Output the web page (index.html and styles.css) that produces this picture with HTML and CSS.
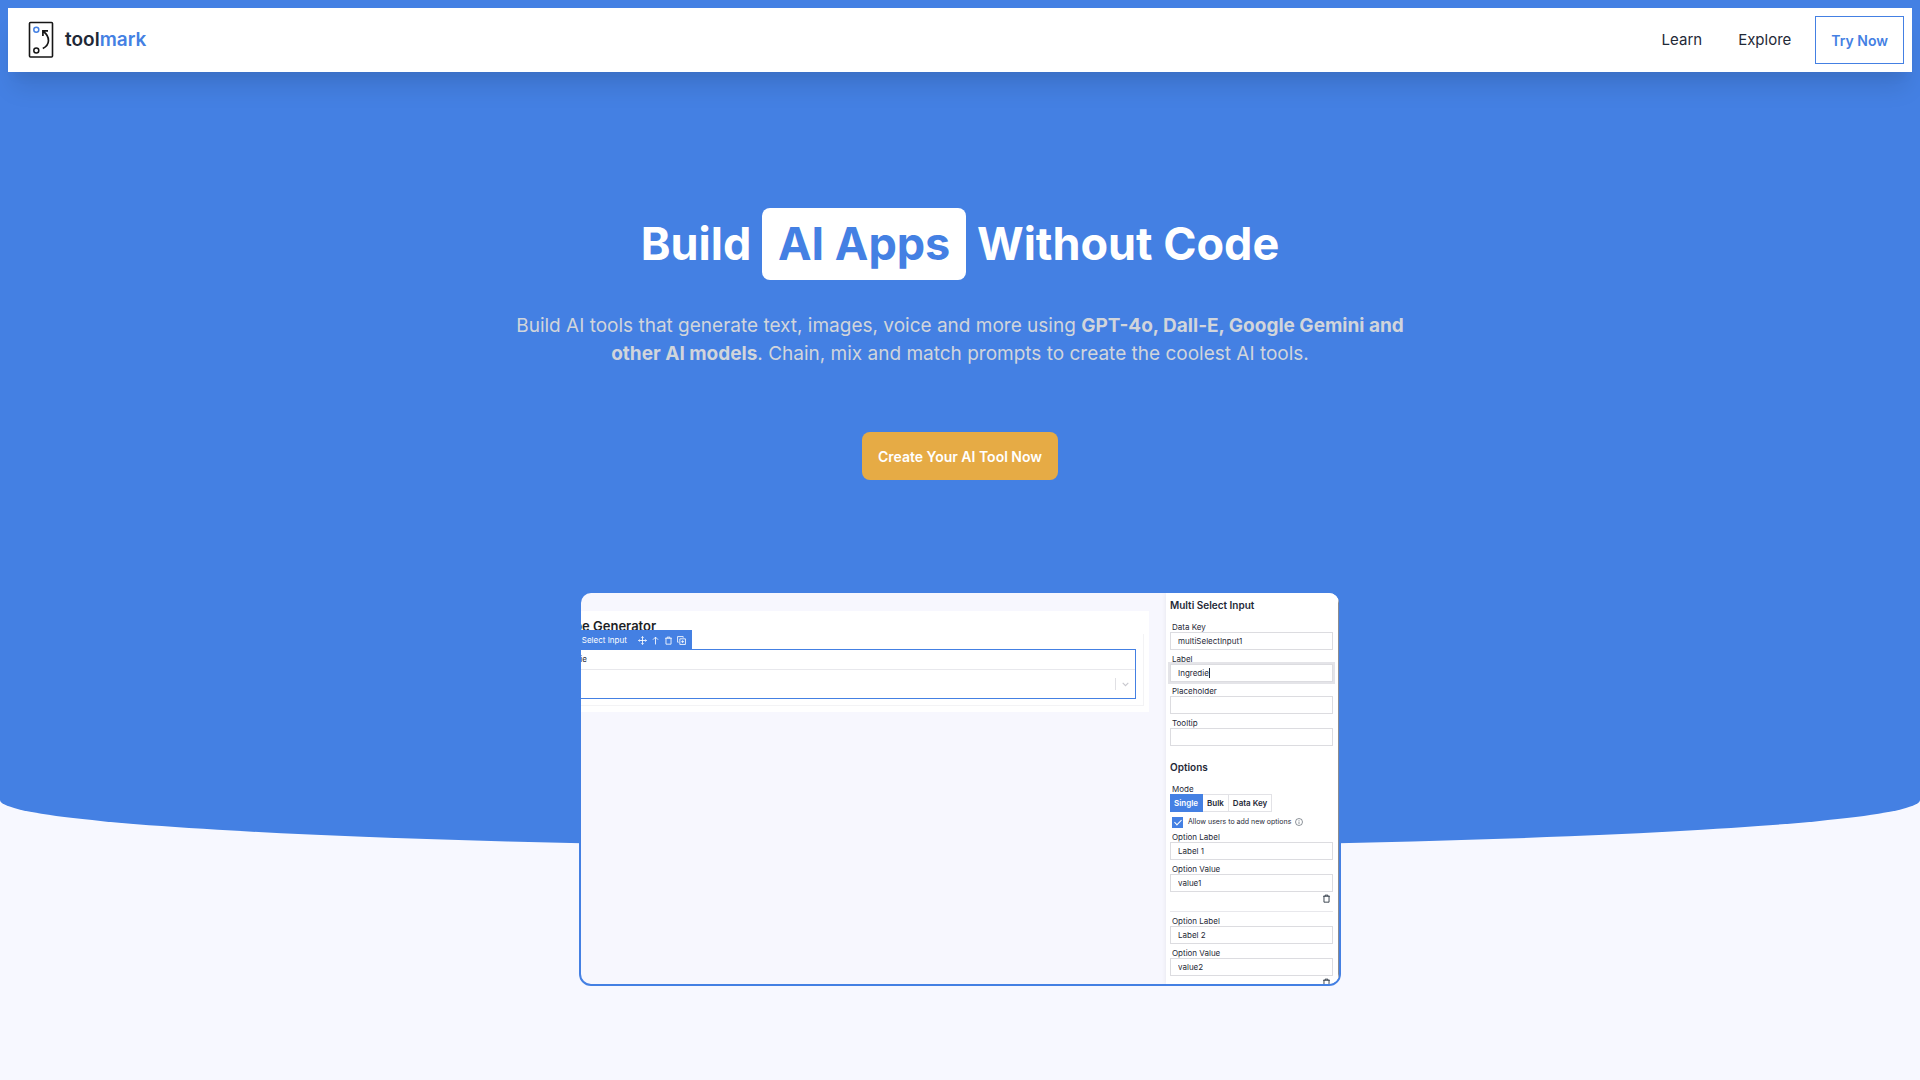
FILE: index.html
```html
<!DOCTYPE html>
<html lang="en">
<head>
<meta charset="utf-8">
<meta name="viewport" content="width=device-width, initial-scale=1">
<title>Toolmark</title>
<link rel="stylesheet" href="styles.css">
</head>
<body>
<svg class="sprite" aria-hidden="true">
  <symbol id="trash" viewBox="0 0 16 16"><path d="M2 4h12M5.500 4V2h5v2M3.500 4v10.500h9V4" /></symbol>
</svg>
<div class="hero">
  <header class="navbar">
    <a class="brand" href="#">
      <svg class="brand-mark" viewBox="0 0 26 38" aria-hidden="true">
        <rect x="1.500" y="1.500" width="23" height="34.500" rx="1" fill="none" stroke="#161616" stroke-width="1.600"/>
        <circle cx="8.300" cy="8.700" r="2.500" fill="none" stroke="#4480e3" stroke-width="1.500"/>
        <circle cx="8.300" cy="29.500" r="2.500" fill="none" stroke="#161616" stroke-width="1.500"/>
        <path d="M14.800 27.500C22 24 22.500 16 15.500 10.500M14.900 15V9.800H20" fill="none" stroke="#161616" stroke-width="1.700"/>
      </svg>
      <span class="brand-name">tool<span class="accent">mark</span></span>
    </a>
    <nav class="links">
      <a class="link" href="#">Learn</a>
      <a class="link" href="#">Explore</a>
      <button class="try" type="button">Try Now</button>
    </nav>
  </header>

  <main class="content">
    <h1 class="title">Build <span class="pill">AI Apps</span> Without Code</h1>
    <p class="lead">Build AI tools that generate text, images, voice and more using <strong>GPT-4o, Dall-E, Google Gemini and other AI models</strong>. Chain, mix and match prompts to create the coolest AI tools.</p>
    <button class="cta" type="button">Create Your AI Tool Now</button>

    <section class="demo" aria-label="Tool editor">
      <div class="canvas">
        <div class="card">
          <h2 class="card-title">Recipe Generator</h2>
          <div class="card-body">
            <div class="selected">
              <div class="toolbar">
                <span>Multi Select Input</span>
                <div class="tools">
                  <svg class="icon" viewBox="0 0 16 16"><path d="M8 1v14M1 8h14M6 3l2-2 2 2M6 13l2 2 2-2M3 6L1 8l2 2M13 6l2 2-2 2"/></svg>
                  <svg class="icon" viewBox="0 0 16 16"><path d="M8 15V2M3.500 6.500L8 2l4.500 4.500"/></svg>
                  <svg class="icon"><use href="#trash"/></svg>
                  <svg class="icon" viewBox="0 0 16 16"><path d="M5 5h10v10H5zM3 11H1V1h10v2M10 7.500v5M7.500 10h5"/></svg>
                </div>
              </div>
              <div class="selected-label">Ingredie</div>
              <div class="selected-box">
                <svg class="chevron" viewBox="0 0 16 16"><path d="M3 6l5 5 5-5"/></svg>
              </div>
            </div>
          </div>
        </div>
      </div>
      <form class="panel">
        <h3 class="panel-title">Multi Select Input</h3>
        <div class="fields">
          <div class="field"><label for="key">Data Key</label><input id="key" type="text" value="multiSelectInput1"></div>
          <div class="field"><label for="label">Label</label><div class="focus"><input id="label" type="text" value="Ingredie"><span class="caret"></span></div></div>
          <div class="field"><label for="placeholder">Placeholder</label><input id="placeholder" type="text"></div>
          <div class="field"><label for="tooltip">Tooltip</label><input id="tooltip" type="text"></div>
        </div>
        <h3 class="panel-title options-title">Options</h3>
        <div class="mode-label">Mode</div>
        <div class="modes">
          <button class="mode mode-on" type="button">Single</button><button class="mode" type="button">Bulk</button><button class="mode" type="button">Data Key</button>
        </div>
        <label class="allow"><input class="check" type="checkbox" checked>Allow users to add new options
          <svg class="icon info" viewBox="0 0 16 16"><circle cx="8" cy="8" r="7"/><path d="M8 7v5M8 4v1.500"/></svg>
        </label>
        <div class="fields">
          <div class="field"><label for="l1">Option Label</label><input id="l1" type="text" value="Label 1"></div>
          <div class="field"><label for="v1">Option Value</label><input id="v1" type="text" value="value1"></div>
        </div>
        <div class="remove"><svg class="icon"><use href="#trash"/></svg></div>
        <div class="fields">
          <div class="field"><label for="l2">Option Label</label><input id="l2" type="text" value="Label 2"></div>
          <div class="field"><label for="v2">Option Value</label><input id="v2" type="text" value="value2"></div>
        </div>
        <div class="remove"><svg class="icon"><use href="#trash"/></svg></div>
      </form>
    </section>
  </main>
</div>
</body>
</html>
```
FILE: styles.css
```css
* { box-sizing: border-box; }
body {
  margin: 0;
  min-height: 100vh;
  background: #f7f8ff;
  color: #1f2937;
  font-family: Inter, "Liberation Sans", sans-serif;
}
h1, h2, h3, p { margin: 0; }
a { color: inherit; text-decoration: none; }
button, input { font: inherit; color: inherit; }
button { cursor: pointer; }
.sprite { display: none; }

.hero {
  display: flow-root;
  padding: 8px 8px 0;
  border-radius: 0 0 50% 50% / 0 0 47px 47px;
  background: #4480e3;
}

.navbar {
  display: flex;
  align-items: center;
  justify-content: space-between;
  height: 64px;
  padding: 0 8px 0 20px;
  background: #fff;
  box-shadow: 0 20px 25px -5px rgba(0, 0, 0, .1), 0 10px 10px -5px rgba(0, 0, 0, .04);
}
.brand { display: flex; align-items: center; gap: 11px; }
.brand-mark { width: 26px; height: 38px; }
.brand-name { font-size: 19px; line-height: 28px; font-weight: 600; }
.accent { color: #4480e3; }
.links { display: flex; align-items: center; }
.link { margin-right: 36px; font-size: 15px; line-height: 24px; }
.link + .link { margin-right: 24px; }
.try {
  height: 48px;
  padding: 0 15px;
  border: 1px solid #4480e3;
  background: #fff;
  color: #4480e3;
  font-size: 14px;
  font-weight: 600;
}

.content { display: flex; flex-direction: column; align-items: center; padding-top: 136px; }
.title { color: #fff; font-size: 45px; line-height: 72px; font-weight: 700; text-align: center; }
.pill { display: inline-block; padding: 0 16px; border-radius: 8px; background: #fff; color: #4480e3; }
.lead {
  max-width: 896px;
  margin-top: 32px;
  color: #d1d5db;
  font-size: 19px;
  line-height: 28px;
  text-align: center;
}
.cta {
  height: 48px;
  margin-top: 64px;
  padding: 0 16px;
  border: 0;
  border-radius: 8px;
  background: #e6ab45;
  color: #fff;
  font-size: 14px;
  font-weight: 600;
}

.demo {
  display: flex;
  width: 762px;
  max-width: 100%;
  height: 395px;
  margin-top: 111px;
  margin-bottom: -139px;
  overflow: hidden;
  border: 2px solid #4480e3;
  border-radius: 12px;
  background: #f7f7fe;
  font-size: 8px;
  line-height: 10px;
}
.icon { display: block; width: 9px; height: 9px; fill: none; stroke: currentColor; stroke-width: 1.500; }
.canvas { flex: 1; min-width: 0; padding: 18px 17px 0 0; }
.card { margin-left: -48px; padding: 7px 5px 6px 14px; background: #fff; }
.card-title { color: #1c1f26; font-size: 13px; line-height: 16px; font-weight: 600; }
.card-body { padding: 15px 7px 6px 0; border: solid #f3f3f5; border-width: 0 1px 1px 0; }
.selected { position: relative; border: 1px solid #4480e3; }
.toolbar {
  position: absolute;
  left: -1px;
  bottom: 100%;
  display: flex;
  align-items: center;
  gap: 11px;
  height: 20px;
  padding: 0 6px 0 14px;
  background: #4480e3;
  color: #fff;
  white-space: nowrap;
}
.tools { display: flex; gap: 4px; }
.selected-label { height: 20px; padding: 4px 8px; border-bottom: 1px solid #e8e8ec; }
.selected-box { display: flex; align-items: center; justify-content: flex-end; height: 28px; padding-right: 5px; }
.chevron { display: block; width: 15px; height: 12px; padding-left: 5px; border-left: 1px solid #e0e0e4; fill: none; stroke: #c8c8ce; stroke-width: 2; }

.panel {
  width: 173px;
  padding: 2px 5px 0 4px;
  border-right: 1px solid #8b8b90;
  background: #fff;
  box-shadow: 0 0 5px rgba(0, 0, 0, .08);
}
.panel-title { font-size: 10px; line-height: 20px; font-weight: 600; }
.fields { display: flex; flex-direction: column; gap: 4px; }
.panel-title + .fields { margin-top: 7px; }
.field label, .mode-label { display: block; height: 10px; padding-left: 2px; line-height: 10px; }
.field input { display: block; width: 100%; height: 18px; padding: 0 7px; border: 1px solid #dcdce0; border-radius: 0; background: #fff; outline: 0; }
.focus { position: relative; box-shadow: 0 0 0 2px #e4e4e8; }
.caret { position: absolute; left: 39px; top: 4px; width: 1px; height: 10px; background: #1f2937; }
.options-title { margin-top: 11px; }
.mode-label { margin-top: 7px; }
.modes { display: flex; }
.mode { height: 18px; padding: 0 4px; border: 1px solid #e2e2e6; border-left: 0; background: #fff; font-weight: 600; }
.mode-on { border-color: #4480e3; background: #4480e3; color: #fff; }
.allow { display: flex; align-items: center; gap: 4px; height: 20px; padding-left: 2px; white-space: nowrap; font-size: 7px; }
.check {
  appearance: none;
  display: grid;
  place-items: center;
  width: 11px;
  height: 11px;
  margin: 0 1px 0 0;
  background: #4480e3;
}
.check:checked::after { content: ""; width: 3px; height: 6px; margin-bottom: 2px; border: solid #fff; border-width: 0 1px 1px 0; rotate: 45deg; }
.info { width: 8px; height: 8px; stroke-width: 1; }
.remove { display: flex; justify-content: flex-end; height: 20px; padding: 2px 2px 0; margin-bottom: 4px; border-bottom: 1px solid #e8e8ec; }
```
